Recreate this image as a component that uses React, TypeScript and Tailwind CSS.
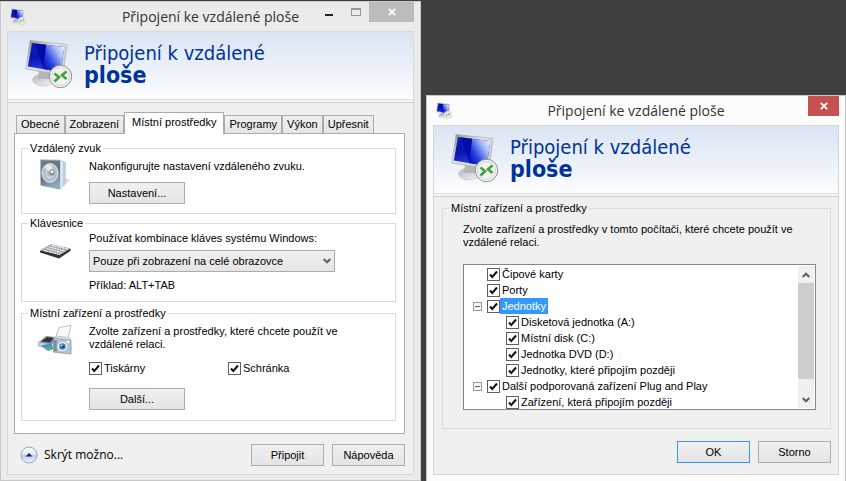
import { useState } from "react";
import type { ReactNode } from "react";

const tabs = ["Obecné", "Zobrazení", "Místní prostředky", "Programy", "Výkon", "Upřesnit"];

const devices = [
  { label: "Čipové karty", level: 0, group: false },
  { label: "Porty", level: 0, group: false },
  { label: "Jednotky", level: 0, group: true },
  { label: "Disketová jednotka (A:)", level: 1, group: false },
  { label: "Místní disk (C:)", level: 1, group: false },
  { label: "Jednotka DVD (D:)", level: 1, group: false },
  { label: "Jednotky, které připojím později", level: 1, group: false },
  { label: "Další podporovaná zařízení Plug and Play", level: 0, group: true },
  { label: "Zařízení, která připojím později", level: 1, group: false },
];

const RemoteIcon = ({ id, className }: { id: string; className: string }) => (
  <svg viewBox="0 0 48 50" className={className} aria-hidden>
    <defs>
      <linearGradient id={`${id}-left`} x1="0.2" y1="0" x2="0.4" y2="1">
        <stop offset="0" stopColor="#0f1fa8" />
        <stop offset="0.5" stopColor="#0a14b4" />
        <stop offset="1" stopColor="#2d45dd" />
      </linearGradient>
      <linearGradient id={`${id}-right`} x1="0" y1="0.9" x2="1" y2="0.1">
        <stop offset="0" stopColor="#0008b8" />
        <stop offset="0.35" stopColor="#2b46e0" />
        <stop offset="0.7" stopColor="#a3b5f6" />
        <stop offset="1" stopColor="#eef3ff" />
      </linearGradient>
      <linearGradient id={`${id}-case`} x1="0" y1="0" x2="1" y2="1">
        <stop offset="0" stopColor="#85888a" />
        <stop offset="0.4" stopColor="#e3e3e3" />
        <stop offset="1" stopColor="#c4c6c8" />
      </linearGradient>
      <linearGradient id={`${id}-foot`} x1="0" y1="0" x2="1" y2="1">
        <stop offset="0" stopColor="#b4b6b8" />
        <stop offset="1" stopColor="#f5f5f5" />
      </linearGradient>
    </defs>
    <ellipse cx="18" cy="41" rx="10.500" ry="6" fill={`url(#${id}-foot)`} stroke="#c3c5c7" strokeWidth="0.6" />
    <path d="M14 32h10l2 8h-13z" fill="#b4b6b8" />
    <path d="M5 1.500 42 5.500 38 36.500 0.800 30z" fill={`url(#${id}-case)`} stroke="#a5a5a5" strokeWidth="0.6" />
    <path d="M7 4 39.300 8 35.800 33 2.800 27.500z" fill={`url(#${id}-left)`} />
    <path d="M21 5.700 39.300 8 35.800 33 18.500 30.100z" fill={`url(#${id}-right)`} />
    <path d="M10 4.400 21 5.700 18.500 30.100z" fill="#0006a4" opacity="0.7" />
    <circle cx="35.500" cy="37.500" r="11.200" fill="#fafafa" stroke="#8c8c8c" strokeWidth="1" />
    <circle cx="35.500" cy="37.500" r="9" fill="#f1f1f1" stroke="#c7c7c7" strokeWidth="0.8" />
    <path d="m29.500 34.500 4.500 3.800-4.500 4.200M41.500 32.500l-4.500 3.800 4.500 3.700" fill="none" stroke="#3da53a" strokeWidth="2.600" />
  </svg>
);

const SpeakerIcon = () => (
  <svg viewBox="0 0 32 32" className="h-8 w-8" aria-hidden>
    <defs>
      <linearGradient id="speaker-face" x1="0" y1="0" x2="0.3" y2="1">
        <stop offset="0" stopColor="#6f808e" />
        <stop offset="0.6" stopColor="#5b7184" />
        <stop offset="1" stopColor="#8fa9bc" />
      </linearGradient>
      <radialGradient id="speaker-cone">
        <stop offset="0" stopColor="#98a4ae" />
        <stop offset="0.5" stopColor="#cdd5da" />
        <stop offset="0.75" stopColor="#a9b5bf" />
        <stop offset="1" stopColor="#e0e6ea" />
      </radialGradient>
    </defs>
    <path d="M22 29 30 21 25 19z" fill="#ddd" />
    <path d="M0.500 0.800 20 1.200V30.500L0.500 26.500z" fill="url(#speaker-face)" />
    <path d="M20 1.200 26 4 25.500 25 20 30.500z" fill="#b9cddd" />
    <path d="M20.500 1.500 23 2.500 22.500 27.500 20.500 29.800z" fill="#dce9f3" />
    <path d="M0.500 0.800 20 1.200 26 4" fill="none" stroke="#a6b5c1" strokeWidth="0.8" />
    <ellipse cx="10" cy="14" rx="8.200" ry="9.500" fill="url(#speaker-cone)" stroke="#d3dce3" strokeWidth="0.8" />
    <path d="M10.500 13.500 4.500 8q4-4.500 8-1z" fill="#eef2f5" opacity="0.8" />
    <ellipse cx="12" cy="13.500" rx="2.600" ry="3.200" fill="#85929d" />
    <circle cx="12" cy="12.800" r="1.500" fill="#f3f6f8" />
  </svg>
);

const KeyboardIcon = () => (
  <svg viewBox="0 0 32 18" className="h-[18px] w-8" aria-hidden>
    <path d="M0 9.500 19 16 30.500 8 30 6.500 12 3z" fill="#46484d" />
    <path d="M0 8.500v2L19 16.500 30.500 9V7L20 13z" fill="#33353b" />
    <path d="M0 8 11 2 30.500 6.500 19.500 13z" fill="#b4b6bc" />
    <path d="m4 8.500 16 3.800M7 6.500l15.500 4M9.500 5 25 8.800M12 3.500 28 7" stroke="#fff" strokeWidth="1.200" strokeDasharray="1.800 0.800" />
    <path d="m4 7.500 16.500 4M7 5.600l16 4.200M9.500 4 26.500 8" stroke="#85878e" strokeWidth="0.500" />
  </svg>
);

const PrinterCameraIcon = () => (
  <svg viewBox="0 0 34 30" className="h-[30px] w-[34px]" aria-hidden>
    <path d="m18 12 3-9.500 12-2.200L30 13z" fill="#fafafa" stroke="#a1a7ab" strokeWidth="0.7" />
    <path d="m1 17 7-6 10 1-4 8z" fill="#8b9297" />
    <path d="m3 16.500 6-4.500 7 1-4 4.500z" fill="#30383d" />
    <path d="M0.500 17v4l13 3v-5z" fill="#c9ced1" stroke="#7c8388" strokeWidth="0.500" />
    <path d="m3 20.500 11-2.500v6l-5 1.500z" fill="#3e96d6" />
    <path d="m5 22 5 1 5-2.500v4l-5 1.500z" fill="#61b16b" />
    <path d="M15.500 13 33 15v14l-17.500-2z" fill="#b9c6d0" stroke="#8197a8" strokeWidth="0.800" />
    <path d="M15.500 13 18.500 11l12 1.500 2.500 2.500z" fill="#e2e9ee" stroke="#8f9daa" strokeWidth="0.500" />
    <path d="M16 15h2.800v11.500H16z" fill="#78909f" />
    <circle cx="24.500" cy="21.500" r="5.500" fill="#eef3f6" stroke="#9aabb8" />
    <circle cx="24.500" cy="21.500" r="3.300" fill="#3b7fc0" />
    <circle cx="24.500" cy="21.500" r="1.600" fill="#123f7c" />
    <circle cx="23.600" cy="20.500" r="0.900" fill="#d9efff" />
    <path d="M28.500 15.800h3v2h-3z" fill="#fff" />
  </svg>
);

const Chevron = ({ up = false }: { up?: boolean }) => (
  <svg viewBox="0 0 8 6" className="h-1.5 w-2" aria-hidden>
    <path d={up ? "M0.700 5 4 1.700 7.300 5" : "M0.700 1 4 4.300 7.300 1"} fill="none" stroke="#606060" strokeWidth="2" />
  </svg>
);

const PushButton = ({ children, wide = false, primary = false }: { children: ReactNode; wide?: boolean; primary?: boolean }) => (
  <button
    type="button"
    className={`h-[22px] border bg-linear-to-b from-[#f0f0f0] to-[#e4e4e4] text-center ${wide ? "w-24" : "w-[73px]"} ${
      primary ? "border-[#3399ff]" : "border-[#acacac]"
    }`}
  >
    {children}
  </button>
);

const Check = ({ label, selected = false, className = "" }: { label: string; selected?: boolean; className?: string }) => (
  <label className={`flex items-center ${className}`}>
    <span className="relative flex h-[13px] w-[13px]">
      <input type="checkbox" defaultChecked className="peer h-[13px] w-[13px] appearance-none border border-[#606060] bg-white" />
      <svg viewBox="0 0 13 13" className="pointer-events-none absolute inset-0 hidden peer-checked:block" aria-hidden>
        <path d="M3 6.500 5.300 9 10 3.500" fill="none" stroke="#111" strokeWidth="2" />
      </svg>
    </span>
    <span className={selected ? "bg-[#3399ff] px-0.5 leading-4 text-white" : "px-0.5 leading-4"}>{label}</span>
  </label>
);

const Group = ({ title, className, children }: { title: string; className: string; children: ReactNode }) => (
  <fieldset className={`border border-[#dcdcdc] ${className}`}>
    <legend className="ml-1.5 px-0.5 leading-[13px]">{title}</legend>
    {children}
  </fieldset>
);

const Banner = ({ id }: { id: string }) => (
  <header>
    <div className="flex h-[67px] items-start bg-linear-to-b from-[#dae5f2] via-[#eaf0f9] to-[#fcfdfd] pt-[7px] pl-[17px]">
      <RemoteIcon id={id} className="h-[50px] w-12" />
      <h1 className="ml-[11px] flex flex-col pt-[3px] font-['DejaVu_Sans_Condensed','DejaVu_Sans',sans-serif] text-xl leading-[22px] text-[#003399]">
        <span>Připojení k vzdálené</span>
        <strong className="text-[23px]">ploše</strong>
      </h1>
    </div>
    <div className="h-1 border-y border-t-[#dfdfdf] border-b-[#d0d0d0] bg-[#f5f5f5]" />
  </header>
);

const TitleBar = ({ id, children }: { id: string; children: ReactNode }) => (
  <div className="grid h-[29px] grid-cols-[1fr_auto_1fr]">
    <RemoteIcon id={id} className="mt-1.5 ml-[9px] h-[17px] w-4" />
    <span className="font-['Open_Sans',sans-serif] text-sm leading-[30px] text-[#333]">Připojení ke vzdálené ploše</span>
    <div className="flex items-start justify-end pr-1.5">{children}</div>
  </div>
);

const CloseCross = () => (
  <svg viewBox="0 0 8 8" className="h-2 w-2" aria-hidden>
    <path d="m0.800 0.800 6.400 6.400M7.200 0.800 0.800 7.200" stroke="#fff" strokeWidth="1.800" />
  </svg>
);

const MainWindow = () => {
  const [active, setActive] = useState(2);

  return (
    <section className="grow basis-[421px] border border-[#c8c8c8] bg-[#ebebeb] pb-[5px]">
      <TitleBar id="main-title">
        <button type="button" aria-label="Minimalizovat" className="flex h-5 w-[27px] items-center justify-center pt-1.5">
          <span className="h-0.5 w-2 bg-[#222]" />
        </button>
        <button type="button" aria-label="Maximalizovat" className="flex h-5 w-[27px] items-center justify-center">
          <span className="h-2 w-2.5 border border-t-2 border-[#999]" />
        </button>
        <button type="button" aria-label="Zavřít" className="flex h-5 w-[45px] items-center justify-center bg-[#bcbcbc]">
          <CloseCross />
        </button>
      </TitleBar>

      <div className="mx-1.5 border border-[#d9d9d9] bg-[#f0f0f0]">
        <Banner id="main" />
        <div className="pt-[9px] pr-2 pb-2 pl-1.5">
          <div role="tablist" className="flex items-end pl-0.5">
            {tabs.map((tab, i) => (
              <button
                key={tab}
                type="button"
                role="tab"
                aria-selected={i === active}
                onClick={() => setActive(i)}
                className={
                  i === active
                    ? "relative -mb-px h-[22px] border border-b-0 border-[#acacac] bg-white px-[7px] pb-0.5"
                    : "h-[18px] border border-b-0 border-[#acacac] bg-linear-to-b from-[#f0f0f0] to-[#e5e5e5] px-1"
                }
              >
                {tab}
              </button>
            ))}
          </div>

          <div role="tabpanel" className="border border-[#acacac] bg-white pt-2 pr-2 pb-3 pl-1.5">
            <Group title="Vzdálený zvuk" className="pb-[9px]">
              <div className="flex gap-[17px] pl-[18px]">
                <div className="pt-1">
                  <SpeakerIcon />
                </div>
                <div className="pt-1">
                  <p className="leading-[14px]">Nakonfigurujte nastavení vzdáleného zvuku.</p>
                  <div className="mt-[9px] flex">
                    <PushButton wide>Nastavení...</PushButton>
                  </div>
                </div>
              </div>
            </Group>

            <Group title="Klávesnice" className="mt-[3px] pb-[9px]">
              <div className="flex gap-[17px] pl-[18px]">
                <div className="pt-3">
                  <KeyboardIcon />
                </div>
                <div className="pt-px">
                  <label htmlFor="shortcuts" className="block leading-[14px]">
                    Používat kombinace kláves systému Windows:
                  </label>
                  <div className="relative mt-[5px] flex w-[246px]">
                    <select
                      id="shortcuts"
                      className="h-[22px] w-full appearance-none border border-[#acacac] bg-linear-to-b from-[#f0f0f0] to-[#e5e5e5] pl-[3px]"
                    >
                      <option>Pouze při zobrazení na celé obrazovce</option>
                      <option>V tomto počítači</option>
                    </select>
                    <span className="pointer-events-none absolute top-2 right-1">
                      <Chevron />
                    </span>
                  </div>
                  <p className="mt-1.5 leading-[14px]">Příklad: ALT+TAB</p>
                </div>
              </div>
            </Group>

            <Group title="Místní zařízení a prostředky" className="mt-[5px] pb-2.5">
              <div className="flex gap-[17px] pl-4">
                <div className="pt-[5px]">
                  <PrinterCameraIcon />
                </div>
                <div className="grow pt-[5px]">
                  <p className="max-w-[260px] leading-[13px]">Zvolte zařízení a prostředky, které chcete použít ve vzdálené relaci.</p>
                  <div className="mt-[9px] flex">
                    <Check label="Tiskárny" className="w-[139px]" />
                    <Check label="Schránka" />
                  </div>
                  <div className="mt-3 flex">
                    <PushButton wide>Další...</PushButton>
                  </div>
                </div>
              </div>
            </Group>
          </div>

          <div className="mt-2.5 flex items-center gap-2 pl-1.5">
            <button type="button" className="mr-auto flex items-center gap-1.5 font-['Open_Sans',sans-serif] text-xs">
              <svg viewBox="0 0 18 18" className="h-[18px] w-[18px]" aria-hidden>
                <defs>
                  <linearGradient id="collapse" x1="0" y1="0" x2="0" y2="1">
                    <stop offset="0" stopColor="#fdfeff" />
                    <stop offset="0.5" stopColor="#dfe5f2" />
                    <stop offset="0.51" stopColor="#bcc8e2" />
                    <stop offset="1" stopColor="#f2f7ff" />
                  </linearGradient>
                </defs>
                <circle cx="9" cy="9" r="8" fill="url(#collapse)" stroke="#97a4c2" />
                <path d="m5.500 10.500 3.500-3.500 3.500 3.500z" fill="#172b63" />
              </svg>
              Skrýt možno...
            </button>
            <PushButton>Připojit</PushButton>
            <PushButton>Nápověda</PushButton>
          </div>
        </div>
      </div>
    </section>
  );
};

const DevicesWindow = () => (
  <section className="grow basis-[420px] border border-b-0 border-[#c8c8c8] bg-[#fcfcfc] pb-1.5">
    <TitleBar id="devices-title">
      <button type="button" aria-label="Zavřít" className="flex h-5 w-[31px] items-center justify-center bg-[#c75050]">
        <CloseCross />
      </button>
    </TitleBar>

    <div className="mx-1.5 border border-[#d5d5d5] bg-[#f0f0f0]">
      <Banner id="devices" />
      <div className="pt-[5px] pr-[7px] pb-[11px] pl-2">
        <Group title="Místní zařízení a prostředky" className="pb-[18px]">
          <div className="pr-3.5 pl-5">
            <p className="pt-2 leading-[13px]">Zvolte zařízení a prostředky v tomto počítači, které chcete použít ve vzdálené relaci.</p>
            <div className="mt-[15px] flex h-[146px] overflow-hidden border border-[#828790] bg-white p-px">
              <ul className="grow">
                {devices.map((device) => (
                  <li key={device.label} className={`flex h-4 items-center ${device.level ? "pl-[41px]" : device.group ? "pl-2" : "pl-[22px]"}`}>
                    {device.group && (
                      <button type="button" aria-label={`Sbalit: ${device.label}`} className="mr-[5px] flex h-[9px] w-[9px] items-center justify-center border border-[#969696] bg-[#f4f4f4]">
                        <span className="h-px w-[5px] bg-[#4b63a7]" />
                      </button>
                    )}
                    <Check label={device.label} selected={device.label === "Jednotky"} />
                  </li>
                ))}
              </ul>
              <div className="flex w-4 flex-col bg-[#f0f0f0]">
                <button type="button" aria-label="Nahoru" className="flex h-[17px] items-center justify-center">
                  <Chevron up />
                </button>
                <div className="h-24 bg-[#cdcdcd]" />
                <button type="button" aria-label="Dolů" className="mt-auto flex h-[17px] items-center justify-center">
                  <Chevron />
                </button>
              </div>
            </div>
          </div>
        </Group>
        <div className="mt-3 flex justify-end gap-2">
          <PushButton primary>OK</PushButton>
          <PushButton>Storno</PushButton>
        </div>
      </div>
    </div>
  </section>
);

export default function App() {
  return (
    <main className="flex min-h-screen items-end gap-[5px] bg-[#404040] font-['Liberation_Sans',Arial,sans-serif] text-[11px] text-black">
      <MainWindow />
      <DevicesWindow />
    </main>
  );
}
